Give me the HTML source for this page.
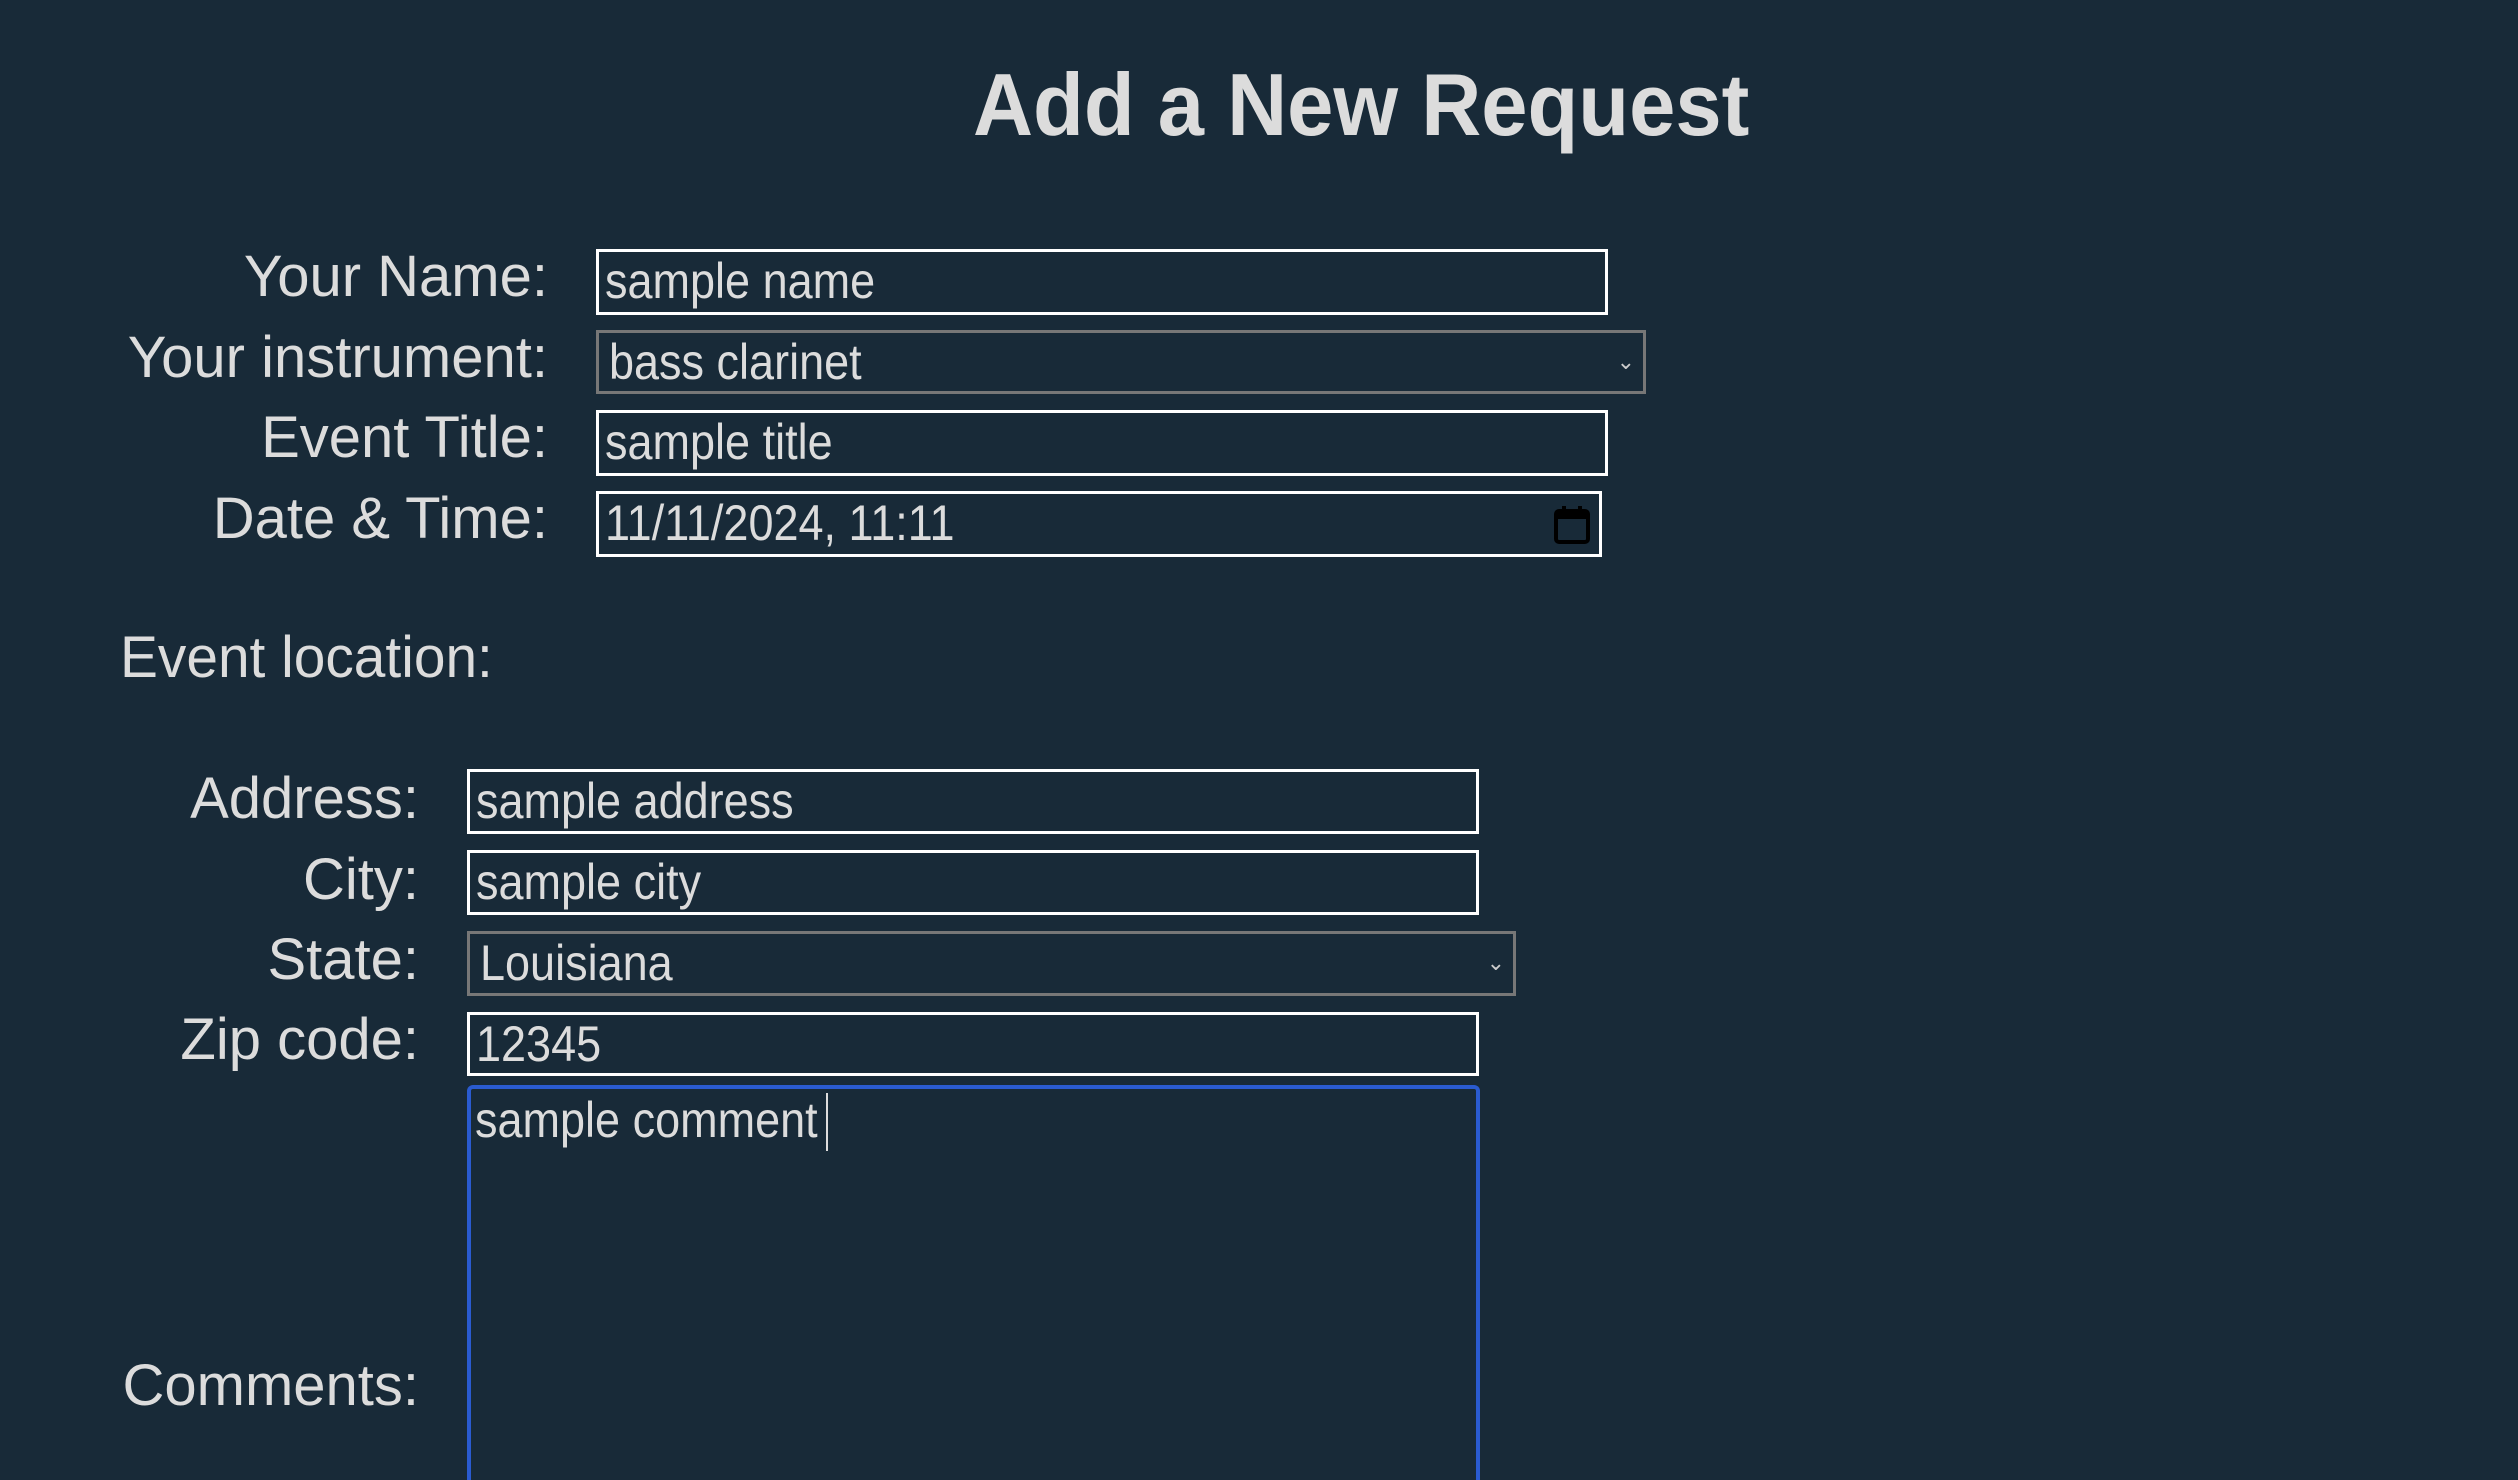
<!DOCTYPE html>
<html style="width:2518px;height:1480px;overflow:hidden"><head><meta charset="utf-8"><style>
body{margin:0;width:2518px;height:1480px;background:#182a38;overflow:hidden;font-family:"Liberation Sans",sans-serif;color:#dcdcdc;position:relative}
.t{position:absolute;left:973px;top:52px;font-size:88px;font-weight:bold;white-space:nowrap;transform-origin:0 0;transform:scaleX(0.945);line-height:1.2}
.l{position:absolute;font-size:58px;white-space:nowrap;text-align:right;line-height:66px;transform-origin:100% 50%;transform:scaleX(1.0)}
.b{position:absolute;box-sizing:border-box;border:3px solid #fff;font-size:50px;line-height:58px;padding-left:6px;white-space:nowrap;transform-origin:0 0;color:#dcdcdc}
.b span{display:inline-block;transform-origin:0 50%;transform:scaleX(0.9)}
.s{border:3px solid #777;padding-left:10px}
.arr{position:absolute;right:8px;top:0;font-size:22px;color:#ccc}
</style></head><body>
<div class="t">Add a New Request</div>

<div class="l" style="right:1970px;top:244px">Your Name:</div>
<div class="l" style="right:1970px;top:325px">Your instrument:</div>
<div class="l" style="right:1970px;top:405px">Event Title:</div>
<div class="l" style="right:1970px;top:486px">Date &amp; Time:</div>

<div class="b" style="left:596px;top:249px;width:1012px;height:66px"><span>sample name</span></div>
<div class="b s" style="left:596px;top:330px;width:1050px;height:64px"><span>bass clarinet</span><div class="arr">&#8964;</div></div>
<div class="b" style="left:596px;top:410px;width:1012px;height:66px"><span>sample title</span></div>
<div class="b" style="left:596px;top:491px;width:1006px;height:66px"><span>11/11/2024, 11:11</span>
<svg style="position:absolute;left:953px;top:11px" width="40" height="40" viewBox="0 0 40 40"><rect x="4" y="6" width="32" height="31" rx="3" fill="none" stroke="#000" stroke-width="4"/><rect x="4" y="6" width="32" height="8" fill="#000"/><rect x="10" y="1" width="4" height="8" fill="#000"/><rect x="26" y="1" width="4" height="8" fill="#000"/></svg></div>

<div class="l" style="left:120px;top:625px;text-align:left;transform-origin:0 50%;transform:scaleX(0.98)">Event location:</div>

<div class="l" style="right:2099px;top:766px">Address:</div>
<div class="l" style="right:2099px;top:847px">City:</div>
<div class="l" style="right:2099px;top:927px">State:</div>
<div class="l" style="right:2099px;top:1007px">Zip code:</div>
<div class="l" style="right:2099px;top:1353px">Comments:</div>

<div class="b" style="left:467px;top:769px;width:1012px;height:65px"><span>sample address</span></div>
<div class="b" style="left:467px;top:850px;width:1012px;height:65px"><span>sample city</span></div>
<div class="b s" style="left:467px;top:931px;width:1049px;height:65px"><span>Louisiana</span><div class="arr">&#8964;</div></div>
<div class="b" style="left:467px;top:1012px;width:1012px;height:64px"><span>12345</span></div>
<div class="b" style="left:467px;top:1085px;width:1013px;height:395px;border:4px solid #2a5bd0;border-bottom:none;border-radius:6px 6px 0 0;padding-left:4px;padding-top:2px"><span>sample comment</span><div style="position:absolute;left:355px;top:4px;width:2px;height:58px;background:#ddd"></div></div>
</body></html>
